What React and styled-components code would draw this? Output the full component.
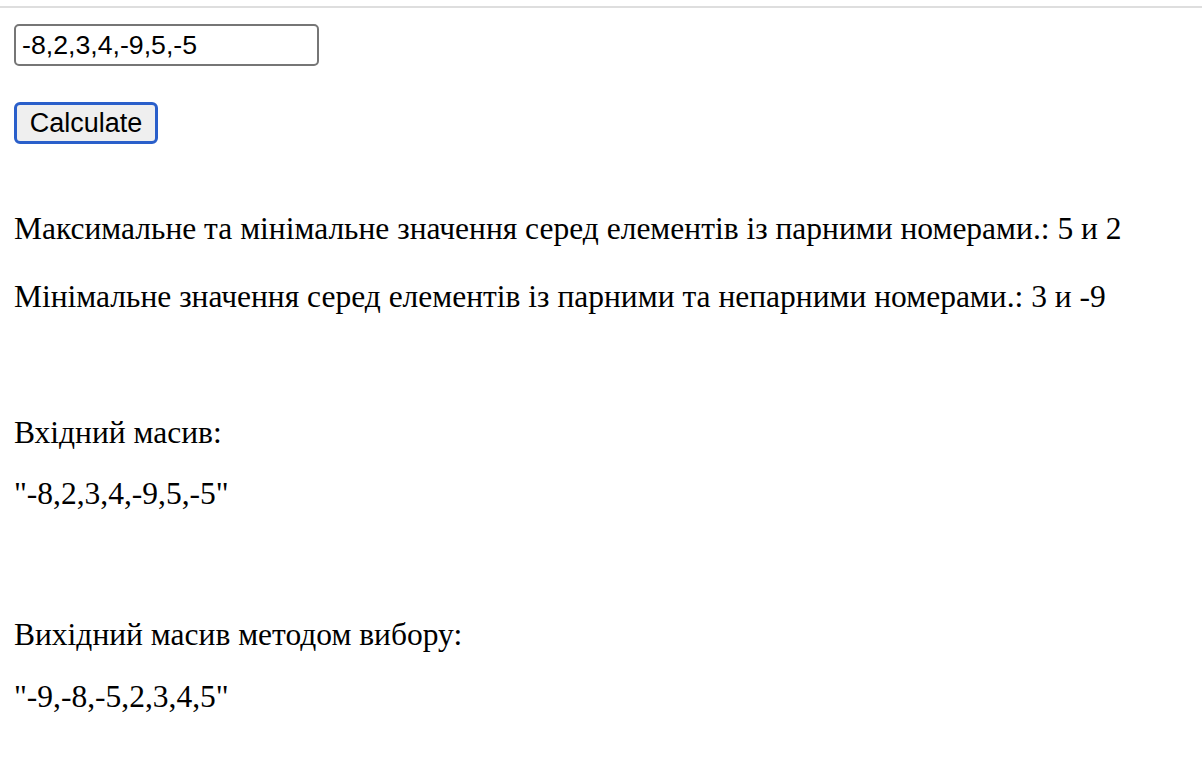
import React, { useState } from "react";
import styled, { createGlobalStyle } from "styled-components";

const GlobalStyle = createGlobalStyle`
  html, body {
    margin: 0;
    padding: 0;
    background: #ffffff;
  }
  body {
    font-family: "Liberation Serif", "Times New Roman", serif;
    color: #000000;
  }
`;

const TopRule = styled.div`
  margin-top: 6px;
  height: 2px;
  background: #dedede;
`;

const Page = styled.main`
  display: flex;
  flex-direction: column;
  align-items: flex-start;
  padding: 0 14px 40px;
`;

const NumbersInput = styled.input`
  box-sizing: border-box;
  margin: 16px 0 0;
  width: 305px;
  height: 42px;
  padding: 0 6px;
  border: 2px solid #767676;
  border-radius: 5px;
  background: #ffffff;
  font-family: "Liberation Sans", Arial, sans-serif;
  font-size: 26.7px;
  color: #000000;
  outline: none;
`;

const CalcButton = styled.button`
  box-sizing: border-box;
  margin-top: 36px;
  width: 144px;
  height: 42px;
  padding: 0;
  border: 3px solid #2a5fca;
  border-radius: 6px;
  background: #efefef;
  font-family: "Liberation Sans", Arial, sans-serif;
  font-size: 27px;
  color: #000000;
  cursor: pointer;
`;

const Block = styled.section`
  display: flex;
  flex-direction: column;
  gap: ${(p) => p.$gap}px;
  margin-top: ${(p) => p.$top}px;
`;

const Line = styled.p`
  margin: 0;
  font-size: 31.5px;
  line-height: 36px;
  white-space: nowrap;
`;

function selectionSort(arr) {
  const a = [...arr];
  for (let i = 0; i < a.length - 1; i++) {
    let m = i;
    for (let j = i + 1; j < a.length; j++) if (a[j] < a[m]) m = j;
    [a[i], a[m]] = [a[m], a[i]];
  }
  return a;
}

export default function App() {
  const [value, setValue] = useState("-8,2,3,4,-9,5,-5");
  const input = "-8,2,3,4,-9,5,-5";
  const sorted = selectionSort(input.split(",").map(Number)).join(",");

  return (
    <>
      <GlobalStyle />
      <TopRule />
      <Page>
        <NumbersInput value={value} onChange={(e) => setValue(e.target.value)} />
        <CalcButton type="button">Calculate</CalcButton>

        <Block $top={67} $gap={32}>
          <Line>Максимальне та мінімальне значення серед елементів із парними номерами.: 5 и 2</Line>
          <Line>Мінімальне значення серед елементів із парними та непарними номерами.: 3 и -9</Line>
        </Block>

        <Block $top={100} $gap={25}>
          <Line>Вхідний масив:</Line>
          <Line>"{input}"</Line>
        </Block>

        <Block $top={105} $gap={26}>
          <Line>Вихідний масив методом вибору:</Line>
          <Line>"{sorted}"</Line>
        </Block>
      </Page>
    </>
  );
}
